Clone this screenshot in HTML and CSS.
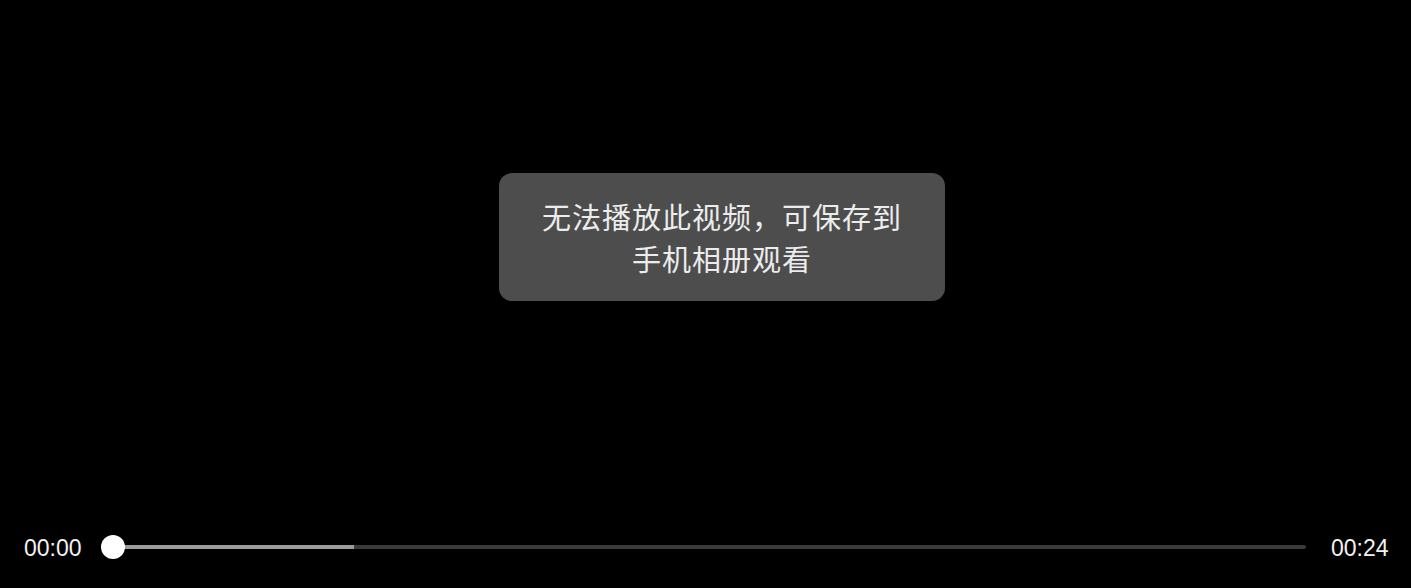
FILE: index.html
```html
<!DOCTYPE html>
<html lang="zh-CN">
<head>
<meta charset="utf-8">
<title>视频</title>
<link rel="stylesheet" href="styles.css">
</head>
<body>
<div class="screen">
  <div class="stage">
    <div class="toast">
      <span class="line">无法播放此视频，可保存到</span>
      <span class="line">手机相册观看</span>
    </div>
  </div>
  <div class="bar">
    <span class="time">00:00</span>
    <div class="slider">
      <div class="track"><div class="fill"></div></div>
      <div class="thumb"></div>
    </div>
    <span class="time time-end">00:24</span>
  </div>
</div>
</body>
</html>
```
FILE: styles.css
```css
html, body {
  margin: 0;
  padding: 0;
  background: #000;
}
.screen {
  width: 1411px;
  height: 588px;
  display: flex;
  flex-direction: column;
  background: #000;
  overflow: hidden;
}
.stage {
  flex: 1;
  display: flex;
  justify-content: center;
  align-items: flex-start;
  padding-top: 173px;
  padding-left: 33px;
}
.toast {
  width: 446px;
  height: 128px;
  box-sizing: border-box;
  padding: 22px 20px;
  background: #4d4d4d;
  border-radius: 13px;
  display: flex;
  flex-direction: column;
  align-items: center;
  font-family: "Noto Sans CJK SC", "Noto Sans", sans-serif;
  font-size: 29px;
  line-height: 42px;
  letter-spacing: 1px;
  color: #ececec;
}
.line {
  display: block;
  white-space: nowrap;
}
.bar {
  height: 24px;
  display: flex;
  align-items: center;
  padding: 0 23px 29px 24px;
  font-family: "Liberation Sans", Arial, sans-serif;
}
.time {
  font-size: 23px;
  color: #f2f2f2;
  width: 57px;
  line-height: 26px;
  padding-top: 1px;
  white-space: nowrap;
}
.slider {
  flex: 1;
  position: relative;
  height: 24px;
  margin-left: 20px;
  margin-right: 25px;
  display: flex;
  align-items: center;
  padding-left: 12px;
}
.track {
  flex: 1;
  height: 4px;
  background: #3a3a3a;
  border-radius: 2px;
  display: flex;
}
.fill {
  width: 241px;
  height: 4px;
  background: #9c9c9c;
}
.thumb {
  position: absolute;
  left: 0;
  top: 0;
  width: 24px;
  height: 24px;
  border-radius: 50%;
  background: #fff;
}
```
